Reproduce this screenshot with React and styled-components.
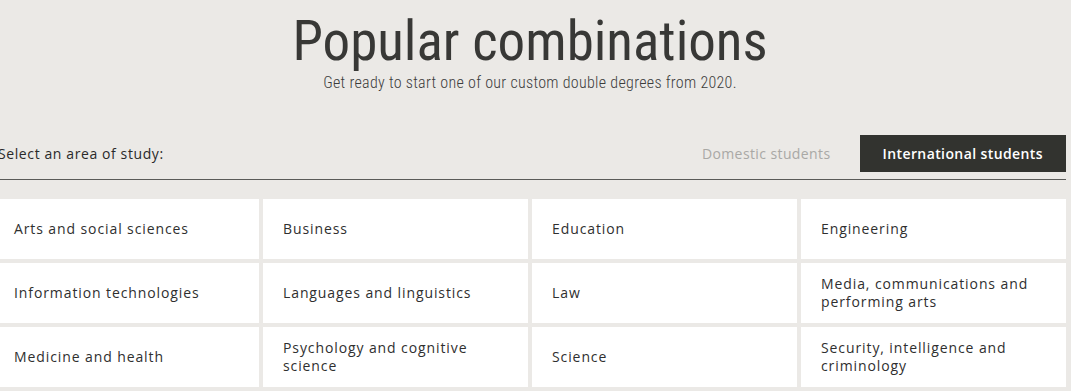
import React from "react";
import styled, { createGlobalStyle } from "styled-components";

const Global = createGlobalStyle`
  html, body { margin: 0; padding: 0; background: #ebe9e6; }
  body { font-family: "Open Sans", "Liberation Sans", sans-serif; color: #333; overflow: hidden; }
`;

const Page = styled.div`
  width: 1072px;
  margin-left: -6px;
`;

const Header = styled.header`
  text-align: center;
  padding-top: 13px;
`;

const Title = styled.h1`
  margin: 0;
  font-family: "Roboto Condensed", "Liberation Sans Narrow", Roboto, sans-serif;
  font-weight: 400;
  font-size: 55px;
  line-height: 56px;
  color: #383836;
`;

const Subtitle = styled.p`
  margin: 5px 0 0;
  font-family: "Roboto Condensed", "Liberation Sans Narrow", Roboto, sans-serif;
  font-weight: 300;
  font-size: 16px;
  letter-spacing: 0.3px;
  line-height: 18px;
  color: #3c3c3c;
`;

const Toolbar = styled.div`
  display: flex;
  justify-content: space-between;
  align-items: center;
  margin-top: 43px;
  padding-bottom: 7px;
  border-bottom: 1px solid #5a5a58;
`;

const Label = styled.span`
  font-size: 14px;
  font-weight: 500;
  color: #2a2a2a;
  letter-spacing: 0.6px;
  padding-left: 4px;
`;

const Tabs = styled.div`
  display: flex;
  gap: 6px;
`;

const Tab = styled.button`
  border: none;
  height: 37px;
  padding: 0 23px;
  font-family: "Open Sans", sans-serif;
  font-size: 14px;
  font-weight: ${(p) => (p.$active ? 600 : 500)};
  letter-spacing: 0.4px;
  background: ${(p) => (p.$active ? "#32332f" : "transparent")};
  color: ${(p) => (p.$active ? "#fff" : "#a9a8a5")};
  cursor: pointer;
`;

const Grid = styled.div`
  display: grid;
  grid-template-columns: repeat(4, 1fr);
  grid-auto-rows: 60px;
  gap: 4px;
  margin-top: 19px;
`;

const Cell = styled.a`
  display: flex;
  align-items: center;
  background: #fff;
  padding: 0 20px;
  font-size: 14px;
  font-weight: 500;
  line-height: 18px;
  letter-spacing: 0.9px;
  color: #2f2f2f;
  text-decoration: none;
`;

const areas = [
  "Arts and social sciences",
  "Business",
  "Education",
  "Engineering",
  "Information technologies",
  "Languages and linguistics",
  "Law",
  "Media, communications and performing arts",
  "Medicine and health",
  "Psychology and cognitive science",
  "Science",
  "Security, intelligence and criminology",
];

export default function App() {
  return (
    <Page>
      <Global />
      <Header>
        <Title>Popular combinations</Title>
        <Subtitle>Get ready to start one of our custom double degrees from 2020.</Subtitle>
      </Header>
      <Toolbar>
        <Label>Select an area of study:</Label>
        <Tabs>
          <Tab>Domestic students</Tab>
          <Tab $active>International students</Tab>
        </Tabs>
      </Toolbar>
      <Grid>
        {areas.map((a) => (
          <Cell key={a} href="#">{a}</Cell>
        ))}
      </Grid>
    </Page>
  );
}
